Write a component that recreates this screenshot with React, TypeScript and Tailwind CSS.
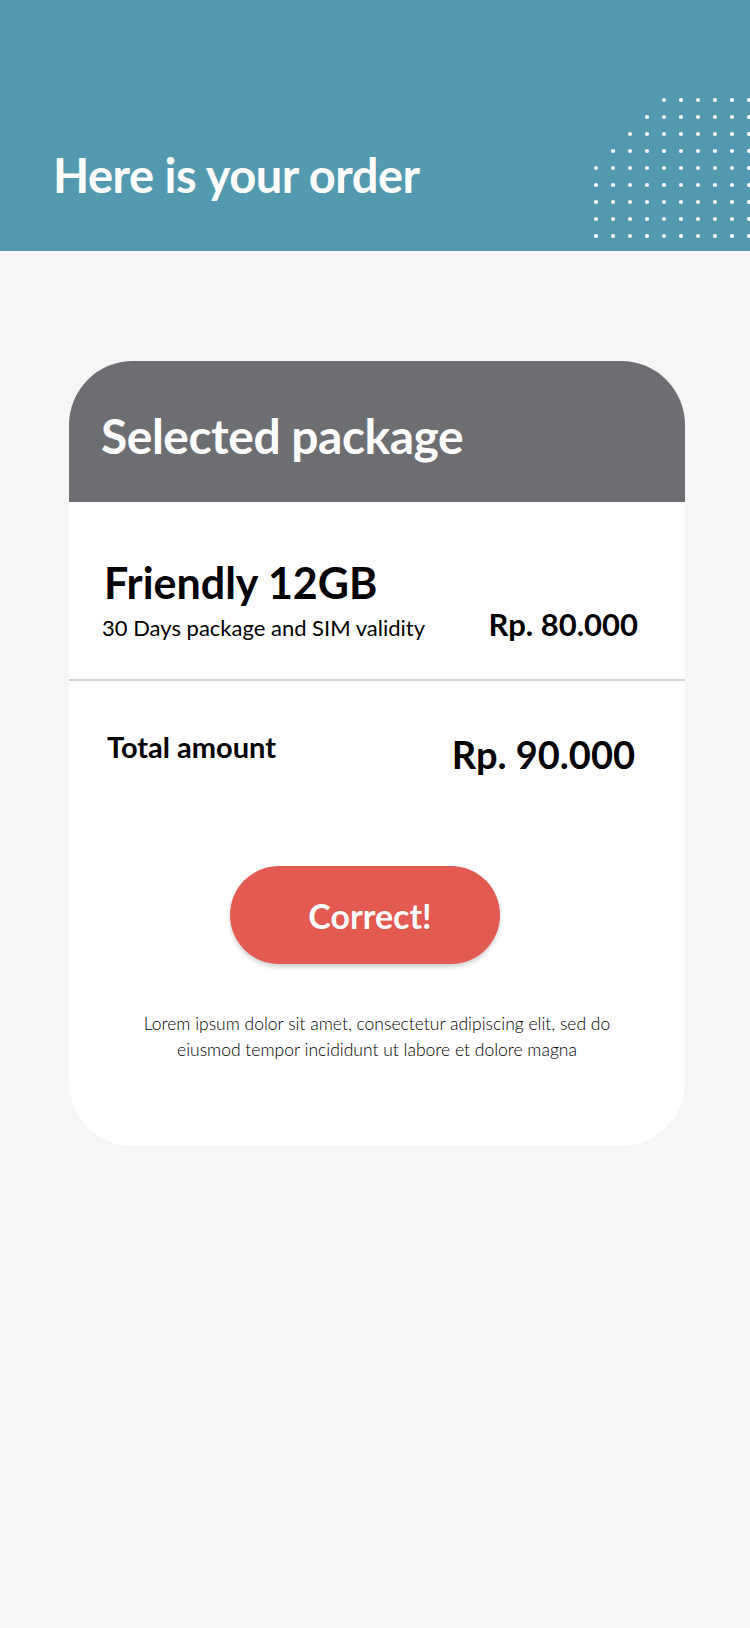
const dotRows = [4, 3, 2, 1, 0, 0, 0, 0, 0];

function Dots() {
  return (
    <svg className="absolute left-0 top-0" width="750" height="251" viewBox="0 0 750 251">
      {dotRows.map((start, r) =>
        Array.from({ length: 10 - start }).map((_, i) => (
          <circle key={`${r}-${i}`} cx={596 + 17 * (start + i)} cy={100 + 17 * r} r="2.1" fill="#ffffff" />
        ))
      )}
    </svg>
  );
}

export default function App() {
  return (
    <div className="min-h-screen bg-[#f6f6f6] pb-10 font-['Lato','Liberation_Sans',sans-serif] text-black">
      <header className="relative h-[251px] overflow-hidden bg-[#5399b0]">
        <Dots />
        <h1 className="relative pl-[53px] pt-[152px] text-[47px] font-bold leading-none tracking-[-0.5px] text-white">
          Here is your order
        </h1>
      </header>

      <div className="ml-[69px] mt-[110px] w-[616px]">
        <div className="h-[141px] rounded-t-[64px] bg-[#6d6e72] pl-[32px] pt-[51px]">
          <h2 className="text-[48px] font-bold leading-none tracking-[-0.5px] text-white">Selected package</h2>
        </div>

        <div className="h-[644px] rounded-b-[64px] bg-white">
          <div className="pl-[33px] pr-[47px] pt-[59px]">
            <h3 className="ml-[2px] text-[43px] font-bold leading-none">Friendly 12GB</h3>
            <div className="mt-[5px] flex items-baseline justify-between">
              <span className="text-[22px] leading-none">30 Days package and SIM validity</span>
              <span className="text-[31px] font-bold leading-none">Rp. 80.000</span>
            </div>
          </div>

          <div className="mt-[39px] h-[2px] bg-[#d4d4d4]" />

          <div className="flex items-start justify-between pl-[38px] pr-[50px] pt-[51px]">
            <span className="text-[29px] font-bold leading-none">Total amount</span>
            <span className="mt-[3px] text-[38px] font-bold leading-none">Rp. 90.000</span>
          </div>

          <button className="ml-[161px] mt-[93px] flex h-[98px] w-[270px] items-center justify-center rounded-full bg-[#e35a50] pl-[10px] text-[34px] font-bold text-white shadow-[0_3px_4px_rgba(0,0,0,0.18)]">
            Correct!
          </button>

          <p className="mx-auto mt-[47px] w-[510px] text-center text-[17.5px] font-light leading-[26px] text-black">
            Lorem ipsum dolor sit amet, consectetur adipiscing elit, sed do eiusmod tempor incididunt ut labore et dolore magna
          </p>
        </div>
      </div>
    </div>
  );
}
